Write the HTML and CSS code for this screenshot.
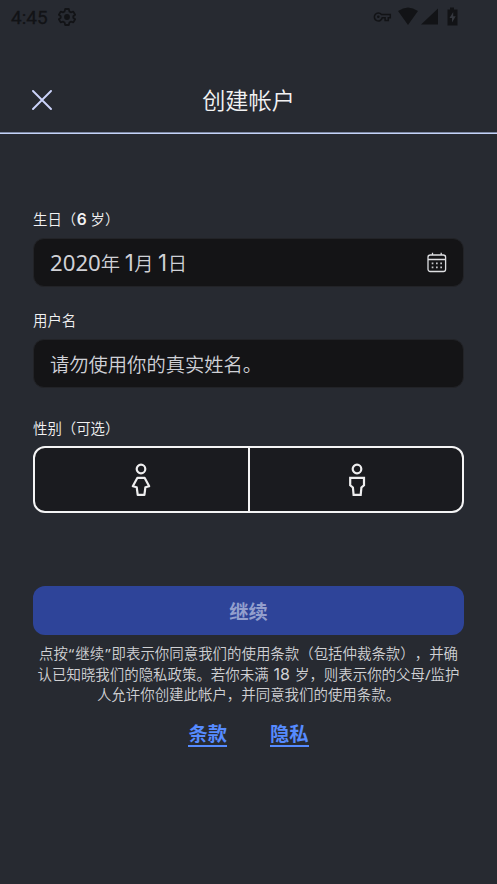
FILE: index.html
```html
<!DOCTYPE html>
<html lang="zh-CN">
<head>
<meta charset="utf-8">
<title>创建帐户</title>
<link rel="stylesheet" href="styles.css">
</head>
<body>
<div class="status">
  <span class="clock">4:45</span>
  <svg class="gear" width="18" height="18" viewBox="0 0 18 18"><path d="M7.2 1h3.6l.6 2.4 1.5.9 2.4-.7 1.8 3.1L15.300 8.200v1.600l1.800 1.500-1.800 3.100-2.400-.7-1.500.9-.6 2.400H7.200l-.6-2.400-1.500-.9-2.400.7-1.800-3.100 1.800-1.500V8.200L.9 6.700l1.800-3.100 2.400.7 1.500-.9z" fill="none" stroke="currentColor" stroke-width="1.800" stroke-linejoin="round"/><circle cx="9" cy="9" r="2.900" fill="currentColor"/></svg>
  <svg class="tray" width="88" height="20" viewBox="0 0 88 20"><g fill="none" stroke="currentColor" stroke-width="1.500"><path d="M8.500 7.500h8.800v3.200h-2v2.700h-3.200v-2.700H9.300a4 4 0 1 1-.8-3.200z"/></g><circle cx="5.300" cy="9.700" r="1.300" fill="currentColor"/><path d="M25 3.500Q35-3.500 45 3.500L35 17.500z M65 1v16H48z M74.500 2H77V0h4v2H84.500v16h-10z" transform="translate(0 .5)" fill="currentColor"/><path d="M80.200 5l-3.700 6H79v4.500l3.700-6.200h-2.500z" fill="#34373e"/></svg>
</div>
<header class="header">
  <svg class="close" width="20" height="20" viewBox="0 0 20 20"><path d="M1 1l18 18M19 1L1 19" fill="none" stroke="#ccd4fb" stroke-width="1.900" stroke-linecap="round"/></svg>
  <h1>创建帐户</h1>
</header>
<main>
  <div class="label">生日（<b class="age">6</b>岁）</div>
  <div class="field">
    <span class="date"><span class="num">2020</span>年<span class="num day">1</span>月<span class="num day">1</span>日</span>
    <svg class="calendar" width="20" height="21" viewBox="0 0 20 21"><g fill="none" stroke="#dedfe2" stroke-width="1.300"><rect x="1" y="3" width="17.600" height="16.500" rx="2.200"/><path d="M1 7.500h17.600M5.500.8V3M14.200.8V3"/></g><path d="M4.700 10.500h1.700v1.700H4.700zM9 10.500h1.700v1.700H9zM13.300 10.500H15v1.700h-1.700zM4.700 14.500h1.700v1.700H4.700zM9 14.500h1.700v1.700H9zM13.300 14.500H15v1.700h-1.700z" fill="#c6c7ca"/></svg>
  </div>
  <div class="label name">用户名</div>
  <div class="field"><span>请勿使用你的真实姓名。</span></div>
  <div class="label gender">性别（可选）</div>
  <div class="choices">
    <div class="choice"><svg width="20" height="34" viewBox="0 0 20 34"><g fill="none" stroke="#eeeeef" stroke-width="2.200" stroke-linejoin="round"><circle cx="10" cy="6" r="4.300"/><path d="M6.300 14.900h7.400l4.500 8.300-3.800 1-1 7.600H6.700l-1-7.600-3.900-1z"/></g></svg></div>
    <div class="choice"><svg width="20" height="34" viewBox="0 0 20 34"><g fill="none" stroke="#eeeeef" stroke-width="2.200"><circle cx="10" cy="6" r="4.300"/><path d="M3.200 14.900h13.800v7.400l-2.600 2.200-.7 7.300H6.600l-.7-7.300-2.700-2.200z"/></g></svg></div>
  </div>
  <button class="continue">继续</button>
  <p class="legal"><span>点按<i class="quote">“</i>继续<i class="quote">”</i>即表示你同意我们的使用条款（包括仲裁条款），并确</span><span>认已知晓我们的隐私政策。若你未满<b class="years">18</b>岁，则表示你的父母<i>/</i>监护</span><span>人允许你创建此帐户，并同意我们的使用条款。</span></p>
  <nav class="links"><a>条款</a><a>隐私</a></nav>
</main>
</body>
</html>
```
FILE: styles.css
```css
* { box-sizing: border-box; }
body {
  margin: 0;
  height: 884px;
  overflow: hidden;
  background: #272a31;
  color: #f2f2f3;
  font-family: "Noto Sans CJK SC", sans-serif;
  font-weight: 350;
  text-spacing-trim: space-all;
}
.status {
  display: flex;
  align-items: center;
  height: 34px;
  padding: 0 36px 0 11px;
  color: #121316;
}
.clock { width: 47px; padding-top: 1px; font: 400 19px/33px Roboto, sans-serif; -webkit-text-stroke: .3px; }
.gear { margin-bottom: 1px; }
.tray { margin-left: auto; margin-bottom: 1px; }
.header {
  display: grid;
  grid-template-columns: 20px 1fr 20px;
  align-items: center;
  height: 100px;
  padding: 33px 32px 0;
  border-bottom: 1px solid #c5d3f8;
  box-shadow: inset 0 -1px #7f8aa5;
}
h1 { margin: 0 0 2px; text-align: center; font-size: 23.2px; font-weight: 350; line-height: 34px; }
main { padding: 75px 33px 0; }
.label { height: 20px; font-size: 14.4px; line-height: 20px; white-space: nowrap; }
.age { display: inline-block; width: 14.4px; padding-left: .5px; font: 600 15.5px/18px Inter, sans-serif; }
.field {
  display: flex;
  align-items: center;
  justify-content: space-between;
  height: 49px;
  margin-top: 9px;
  padding: 0 17px 0 16px;
  border: 1px solid #222327;
  border-radius: 11px;
  background: #141416;
  color: #d0d1d6;
  font-size: 19.3px;
  line-height: 30px;
}
.date { white-space: nowrap; }
.num { font: 22.2px/28px "Noto Sans", sans-serif; }
.day { display: inline-block; width: 9.6px; margin-left: 4.6px; font-family: Inter, sans-serif; }
.calendar { margin-right: -1px; }
.name { margin-top: 23px; }
.gender { margin-top: 30px; }
.choices {
  display: grid;
  grid-template-columns: 213px 1fr;
  height: 67px;
  margin-top: 8px;
  border: 2px solid #f4f4f5;
  border-radius: 12px;
  background: #1a1b1f;
}
.choice { display: grid; place-items: center; padding-right: 1px; }
.choice + .choice { padding: 0 0 0 1px; border-left: 2px solid #f4f4f5; }
.continue {
  display: block;
  width: 100%;
  height: 49px;
  margin-top: 73px;
  padding: 0;
  border: 0;
  border-radius: 12px;
  background: #2e4499;
  color: #939fcd;
  font: 700 19.3px/30px "Noto Sans CJK SC", sans-serif;
}
.legal {
  margin: 8px -10px 0;
  color: #d0d1d4;
  font-size: 14.45px;
  line-height: 20.7px;
  text-align: center;
}
.legal span { display: block; height: 20.7px; white-space: nowrap; }
.legal i { font: normal 15px/18px "Noto Sans", sans-serif; }
.legal .quote { display: inline-block; width: 7.4px; }
.years { display: inline-block; padding: 0 5px; font: 400 16px/18px Inter, sans-serif; }
.links { display: flex; justify-content: center; gap: 43px; margin-top: 15px; }
.links a {
  height: 27px;
  border-bottom: 2px solid #568bff;
  color: #568bff;
  font-size: 19.3px;
  font-weight: 700;
  line-height: 26px;
}
```
